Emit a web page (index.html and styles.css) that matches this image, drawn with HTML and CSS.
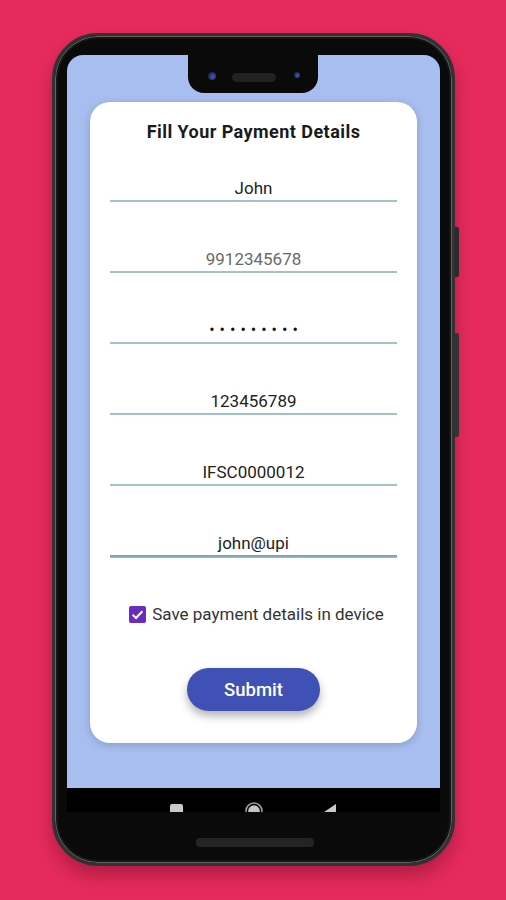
FILE: index.html
```html
<!DOCTYPE html>
<html lang="en">
<head>
<meta charset="utf-8">
<title>Payment Details</title>
<link rel="stylesheet" href="styles.css">
</head>
<body>
<div class="phone">
  <span class="side-btn power"></span>
  <span class="side-btn volume"></span>
  <div class="screen">
    <div class="notch">
      <span class="cam cam-l"></span>
      <span class="speaker"></span>
      <span class="cam cam-r"></span>
    </div>
    <div class="app">
      <div class="card">
        <h1 class="title">Fill Your Payment Details</h1>
        <div class="fields">
          <div class="field">John</div>
          <div class="field hint">9912345678</div>
          <div class="field pass">•••••••••</div>
          <div class="field">123456789</div>
          <div class="field">IFSC0000012</div>
          <div class="field focus">john@upi</div>
        </div>
        <label class="check">
          <span class="box"><svg width="17" height="17" viewBox="0 0 17 17"><path d="M3.6 8.8 L7 12 L13.4 5.2" fill="none" stroke="#fff" stroke-width="2"/></svg></span>
          <span class="check-label">Save payment details in device</span>
        </label>
        <button class="submit" type="button">Submit</button>
      </div>
    </div>
    <div class="navbar">
      <svg class="nav-icon sq" width="13" height="18" viewBox="0 0 13 18"><rect x="0" y="2" width="13" height="13" rx="2" fill="#c9c9c9"/></svg>
      <svg class="nav-icon home" width="18" height="18" viewBox="0 0 18 18"><circle cx="9" cy="9" r="8" fill="none" stroke="#9a9a9a" stroke-width="1.6"/><circle cx="9" cy="9" r="5.8" fill="#c4c4c4"/></svg>
      <svg class="nav-icon back" width="12" height="18" viewBox="0 0 12 18"><polygon points="12,2 12,18 0,10" fill="#c9c9c9"/></svg>
    </div>
  </div>
  <div class="chin"><span class="grille"></span></div>
</div>
</body>
</html>
```

FILE: styles.css
```css
html, body {
  margin: 0;
  padding: 0;
}
body {
  background: #e62b5c;
  width: 506px;
  height: 900px;
  overflow: hidden;
  font-family: Roboto, "Liberation Sans", Arial, sans-serif;
}
.phone {
  position: relative;
  box-sizing: border-box;
  width: 403px;
  height: 833px;
  margin: 33px 0 0 52px;
  padding: 19px 12px 0;
  background: #0a0a0a;
  border: 3px solid #323232;
  border-radius: 46px;
  box-shadow: inset 0 0 0 1px #626262, inset 0 0 0 3px #151515, 0 10px 18px rgba(80, 0, 20, 0.35);
}
.side-btn {
  position: absolute;
  right: -7px;
  width: 4px;
  background: #2b2b2b;
  border-radius: 0 2px 2px 0;
}
.power {
  top: 191px;
  height: 50px;
}
.volume {
  top: 297px;
  height: 104px;
  background: #343434;
}
.screen {
  position: relative;
  width: 373px;
}
.notch {
  position: absolute;
  left: 121px;
  top: 0;
  width: 130px;
  height: 38px;
  background: #0a0a0a;
  border-radius: 0 0 16px 16px;
}
.cam {
  position: absolute;
  border-radius: 50%;
  background: radial-gradient(circle at 60% 60%, #4a5fb0 0, #22306a 55%, #0d1022 100%);
}
.cam-l {
  left: 20px;
  top: 17px;
  width: 8px;
  height: 8px;
}
.cam-r {
  left: 106px;
  top: 17px;
  width: 6px;
  height: 6px;
}
.speaker {
  position: absolute;
  left: 44px;
  top: 18px;
  width: 44px;
  height: 9px;
  border-radius: 5px;
  background: #222;
}
.app {
  height: 733px;
  background: #a8bef0;
  border-radius: 16px 16px 0 0;
  padding: 47px 23px 0;
  box-sizing: border-box;
}
.card {
  box-sizing: border-box;
  height: 641px;
  background: #fff;
  border-radius: 20px;
  padding: 19px 20px 0;
  display: flex;
  flex-direction: column;
  box-shadow: 0 2px 8px rgba(0, 0, 0, 0.18);
}
.title {
  margin: 0;
  font-size: 18px;
  line-height: 22px;
  font-weight: 700;
  letter-spacing: 0.45px;
  text-align: center;
  color: #1a1a1a;
}
.fields {
  margin-top: 35px;
  display: flex;
  flex-direction: column;
  gap: 47px;
}
.field {
  font-size: 17px;
  line-height: 20px;
  padding-bottom: 2px;
  border-bottom: 2px solid #9fc3c7;
  text-align: center;
  color: #222;
}
.field.hint {
  color: #6a6a6a;
}
.field.pass {
  color: #111;
  font-size: 16px;
  letter-spacing: 5px;
  text-indent: 5px;
}
.field.focus {
  border-bottom: 2px solid #7ea9b0;
  box-shadow: 0 1px 0 #9cbdc2;
}
.check {
  margin-top: 47px;
  align-self: center;
  display: flex;
  align-items: center;
  gap: 6px;
  line-height: 20px;
  font-size: 17px;
  color: #333;
  padding-left: 6px;
}
.box {
  display: block;
  width: 17px;
  height: 17px;
  background: #6a2cbc;
  border-radius: 2px;
}
.box svg {
  display: block;
}
.submit {
  margin-top: 44px;
  align-self: center;
  width: 133px;
  height: 43px;
  border: none;
  border-radius: 22px;
  background: #3f51b5;
  color: #fff;
  font-family: Roboto, "Liberation Sans", Arial, sans-serif;
  font-size: 18.5px;
  font-weight: 500;
  box-shadow: 0 5px 9px rgba(0, 0, 0, 0.3);
}
.navbar {
  height: 24px;
  background: #000;
  overflow: hidden;
  display: flex;
  align-items: flex-start;
  padding: 14px 0 0 103px;
  box-sizing: border-box;
}
.nav-icon {
  display: block;
  flex: none;
}
.home {
  margin-left: 62px;
}
.back {
  margin-left: 61px;
}
.chin {
  height: 51px;
  display: flex;
  justify-content: center;
  padding-top: 26px;
  box-sizing: border-box;
  margin-left: 2px;
}
.grille {
  display: block;
  width: 118px;
  height: 9px;
  border-radius: 4px;
  background: #242424;
}
```
